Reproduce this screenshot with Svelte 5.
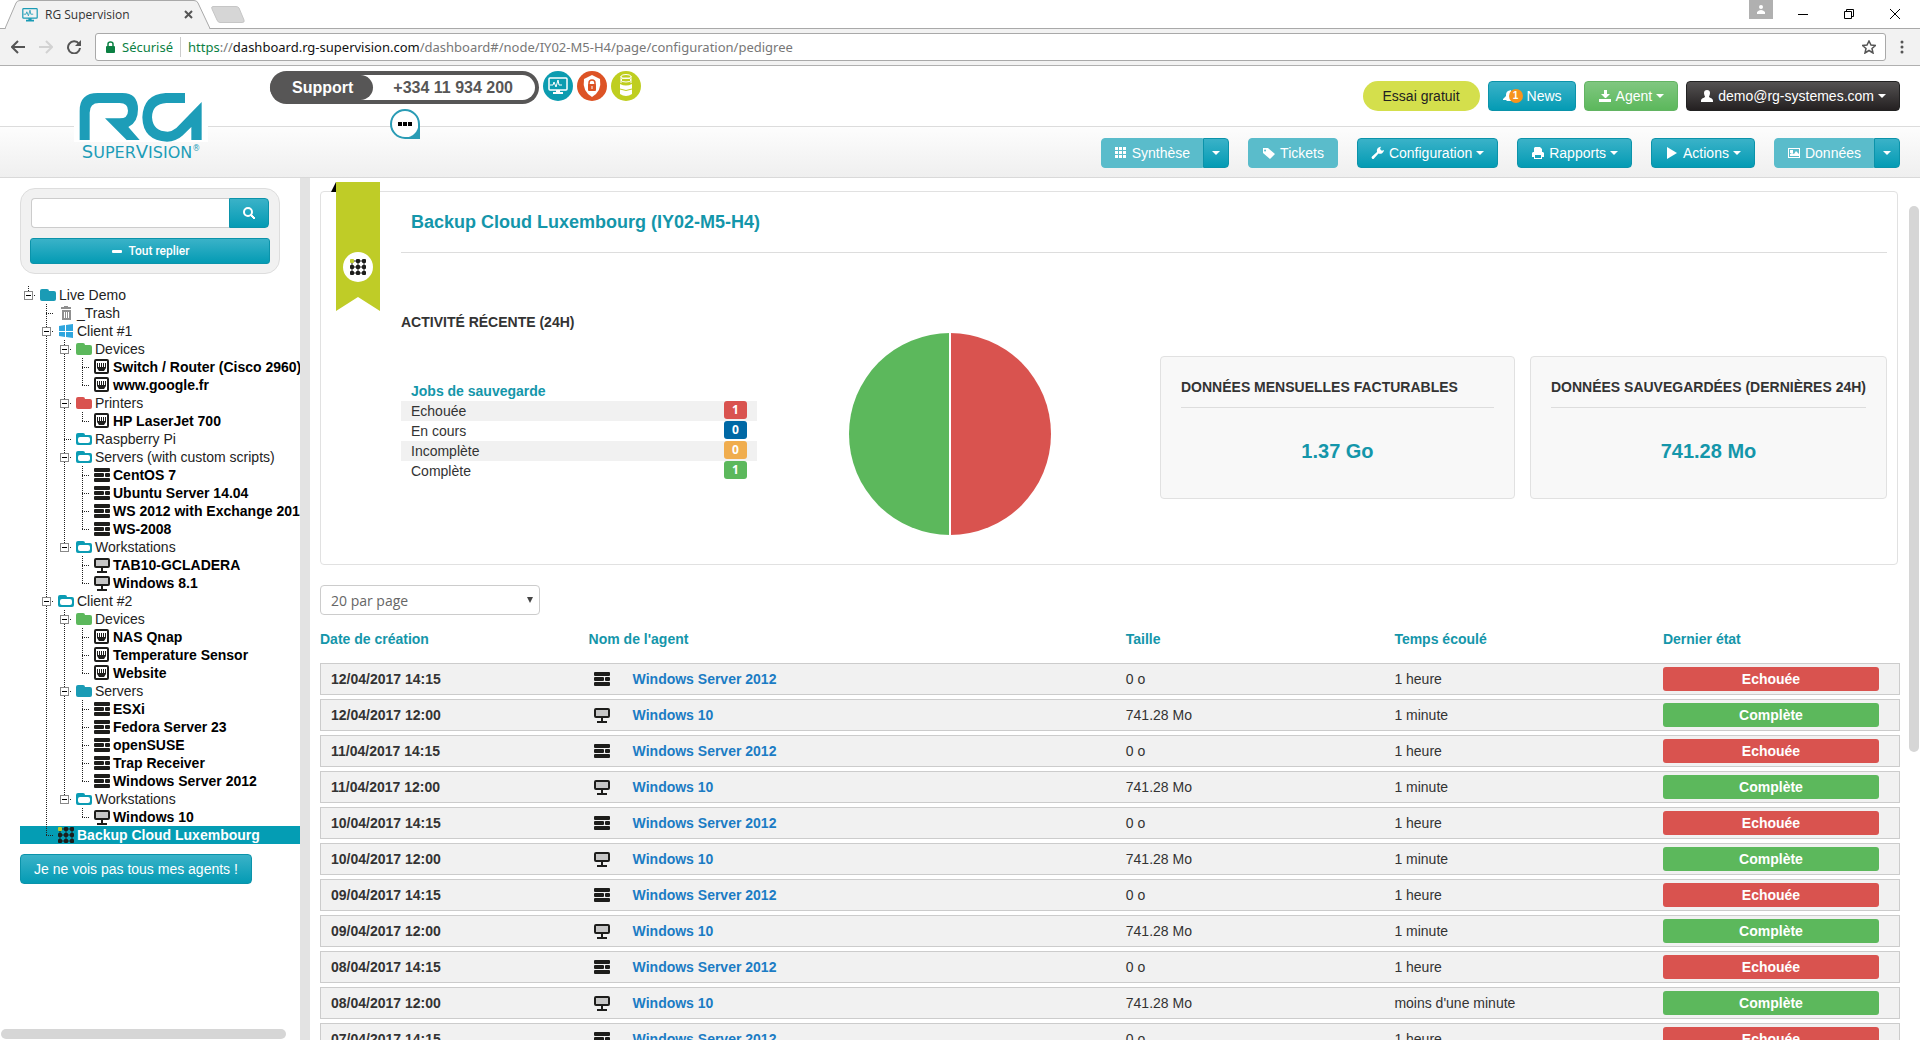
<script lang="ts">
  type TreeNode = { label: string; icon: string; children?: TreeNode[] }
  type TreeRow = { node: TreeNode; lasts: boolean[]; key: string }

  const tree: TreeNode = {
    label: 'Live Demo',
    icon: 'folder-blue',
    children: [
      { label: '_Trash', icon: 'trash' },
      {
        label: 'Client #1',
        icon: 'windows',
        children: [
          {
            label: 'Devices',
            icon: 'folder-green',
            children: [
              { label: 'Switch / Router (Cisco 2960)', icon: 'port' },
              { label: 'www.google.fr', icon: 'port' },
            ],
          },
          { label: 'Printers', icon: 'folder-red', children: [{ label: 'HP LaserJet 700', icon: 'port' }] },
          { label: 'Raspberry Pi', icon: 'folder-open' },
          {
            label: 'Servers (with custom scripts)',
            icon: 'folder-open',
            children: [
              { label: 'CentOS 7', icon: 'server' },
              { label: 'Ubuntu Server 14.04', icon: 'server' },
              { label: 'WS 2012 with Exchange 2013', icon: 'server' },
              { label: 'WS-2008', icon: 'server' },
            ],
          },
          {
            label: 'Workstations',
            icon: 'folder-open',
            children: [
              { label: 'TAB10-GCLADERA', icon: 'screen' },
              { label: 'Windows 8.1', icon: 'screen' },
            ],
          },
        ],
      },
      {
        label: 'Client #2',
        icon: 'folder-open',
        children: [
          {
            label: 'Devices',
            icon: 'folder-green',
            children: [
              { label: 'NAS Qnap', icon: 'port' },
              { label: 'Temperature Sensor', icon: 'port' },
              { label: 'Website', icon: 'port' },
            ],
          },
          {
            label: 'Servers',
            icon: 'folder-blue',
            children: [
              { label: 'ESXi', icon: 'server' },
              { label: 'Fedora Server 23', icon: 'server' },
              { label: 'openSUSE', icon: 'server' },
              { label: 'Trap Receiver', icon: 'server' },
              { label: 'Windows Server 2012', icon: 'server' },
            ],
          },
          { label: 'Workstations', icon: 'folder-open', children: [{ label: 'Windows 10', icon: 'screen' }] },
        ],
      },
      { label: 'Backup Cloud Luxembourg', icon: 'grid' },
    ],
  }

  const agentIcons = ['port', 'server', 'screen', 'grid']

  let collapsed = $state<Record<string, boolean>>({})
  let selected = $state('Backup Cloud Luxembourg')

  function flatten(node: TreeNode, lasts: boolean[], key: string): TreeRow[] {
    const rows: TreeRow[] = [{ node, lasts, key }]
    if (node.children && !collapsed[key]) {
      const count = node.children.length
      node.children.forEach((child, i) => {
        rows.push(...flatten(child, [...lasts, i === count - 1], `${key}.${i}`))
      })
    }
    return rows
  }

  let rows = $derived(flatten(tree, [true], '0'))

  const jobs = [
    { label: 'Echouée', count: 1, kind: 'danger' },
    { label: 'En cours', count: 0, kind: 'info' },
    { label: 'Incomplète', count: 0, kind: 'warning' },
    { label: 'Complète', count: 1, kind: 'success' },
  ]

  const stats = [
    { title: 'DONNÉES MENSUELLES FACTURABLES', value: '1.37 Go' },
    { title: 'DONNÉES SAUVEGARDÉES (DERNIÈRES 24H)', value: '741.28 Mo' },
  ]

  const backups = ['12', '11', '10', '09', '08', '07']
    .flatMap((day) => [
      { date: `${day}/04/2017 14:15`, agent: 'Windows Server 2012', icon: 'server', size: '0 o', time: '1 heure', ok: false },
      {
        date: `${day}/04/2017 12:00`,
        agent: 'Windows 10',
        icon: 'screen',
        size: '741.28 Mo',
        time: day === '08' ? "moins d'une minute" : '1 minute',
        ok: true,
      },
    ])
    .slice(0, 11)
</script>

{#snippet icon(name: string)}
  <svg class="icon" viewBox="0 0 16 16" width="16" height="16" aria-hidden="true">
    {#if name === 'folder-blue' || name === 'folder-green' || name === 'folder-red'}
      <path
        fill={name === 'folder-blue' ? '#1a9bb5' : name === 'folder-green' ? '#5cb85c' : '#d9534f'}
        d="M0 4a2 2 0 0 1 2-2h5a2 2 0 0 1 2 2h5a2 2 0 0 1 2 2v6a2 2 0 0 1-2 2H2a2 2 0 0 1-2-2z"
      />
    {:else if name === 'folder-open'}
      <path
        fill="#0b9cb4"
        fill-rule="evenodd"
        d="M0 4a2 2 0 0 1 2-2h5a2 2 0 0 1 2 2h5a2 2 0 0 1 2 2v6a2 2 0 0 1-2 2H2a2 2 0 0 1-2-2zM4 6a2 2 0 0 0-2 2v2a2 2 0 0 0 2 2h8a2 2 0 0 0 2-2V8a2 2 0 0 0-2-2z"
      />
    {:else if name === 'trash'}
      <path fill="#8f8f8f" d="M3 2h3V1h4v1h3v2H3zM4 5h9v10H4zm2 2v6h1V7zm2 0v6h1V7zm2 0v6h1V7z" fill-rule="evenodd" />
    {:else if name === 'windows'}
      <path fill="#2fa6de" d="M1 3l6-1v6H1zM8 2l7-1v7H8zM1 9h6v5l-6-1zM8 9h7v6l-7-1z" />
    {:else if name === 'port'}
      <rect x="1" y="1" width="13" height="13" rx="1" fill="#fff" stroke="#1d1d1b" stroke-width="2" />
      <path fill="#1d1d1b" d="M3 4h1v4h1V4h1v4h1V4h1v4h1V4h1v4h1V4h1v5l-2 3H5L3 9z" />
    {:else if name === 'server'}
      <path
        fill="#1d1d1b"
        d="M1 1h14a1 1 0 0 1 1 1v2a1 1 0 0 1-1 1H1a1 1 0 0 1-1-1V2a1 1 0 0 1 1-1zM1 6h8a1 1 0 0 1 1 1v2a1 1 0 0 1-1 1H1a1 1 0 0 1-1-1V7a1 1 0 0 1 1-1zM12 6h3a1 1 0 0 1 1 1v2a1 1 0 0 1-1 1h-3a1 1 0 0 1-1-1V7a1 1 0 0 1 1-1zM1 11h14a1 1 0 0 1 1 1v2a1 1 0 0 1-1 1H1a1 1 0 0 1-1-1v-2a1 1 0 0 1 1-1z"
      />
    {:else if name === 'screen'}
      <rect x="1" y="2" width="14" height="8" rx="1" fill="#c6c6c6" stroke="#1d1d1b" stroke-width="2" />
      <path fill="#1d1d1b" d="M7 10h2v4h4v2H3v-2h4z" />
    {:else if name === 'grid'}
      <path stroke="#1d1d1b" stroke-width="1" d="M2 2v12M8 2v12M14 2v12M2 2h12M2 8h12M2 14h12" />
      {#each [0, 6, 12] as y}
        {#each [0, 6, 12] as x}
          <rect {x} {y} width="4" height="4" rx="1" fill={x + y === 0 ? '#bccb2b' : '#1d1d1b'} />
        {/each}
      {/each}
    {/if}
  </svg>
{/snippet}

{#snippet glyph(name: string)}
  <svg class="glyph" viewBox="0 0 14 14" width="14" height="14" fill="currentColor" aria-hidden="true">
    {#if name === 'th'}
      <path d="M1 1h3v3H1zM5 1h3v3H5zM9 1h3v3H9zM1 5h3v3H1zM5 5h3v3H5zM9 5h3v3H9zM1 9h3v3H1zM5 9h3v3H5zM9 9h3v3H9z" />
    {:else if name === 'tag'}
      <path fill-rule="evenodd" d="M1 2h5l7 6-5 5-7-6zm2 1.500a1 1 0 1 0 .1 2 1 1 0 0 0-.1-2z" />
    {:else if name === 'wrench'}
      <path d="M13 4a4 4 0 0 1-5.500 3.500L3 12.500a1.400 1.400 0 0 1-2-2L6 6A4 4 0 0 1 10 .800L9 3l1.800 1.800z" />
    {:else if name === 'print'}
      <path fill-rule="evenodd" d="M4 1h5l2 2v3h1l1 1v4h-2v2H3v-2H1V7l1-1h1V2zm0 8v3h6V9z" />
    {:else if name === 'play'}
      <path d="M2 1l10 6-10 6z" />
    {:else if name === 'picture'}
      <path fill-rule="evenodd" d="M1 2h12v10H1zm1 1v8h10V3zM3 4h3v3H3zM3 10V8l2-1 2 1 2-3 3 3v2z" />
    {:else if name === 'bell'}
      <path d="M9 1L6 2C4 3 4 5 4 7l-3 3v1h3l1 1h4z" />
    {:else if name === 'download'}
      <path d="M6 1h3v4h3L8 9H7L3 5h3zM1 10h12v3H1z" />
    {:else if name === 'user'}
      <path d="M7 1c2 0 3 1 3 3s-1 3-1 4c1 1 4 1 4 4v1H1v-1c0-3 3-3 4-4 0-1-1-2-1-4s1-3 3-3z" />
    {:else if name === 'search'}
      <circle cx="6" cy="6" r="4" fill="none" stroke="currentColor" stroke-width="2" />
      <path d="M8 9l1-1 4 4-1 1z" stroke="currentColor" />
    {:else if name === 'minus'}
      <rect x="2" y="6" width="10" height="3" rx="1" />
    {/if}
  </svg>
{/snippet}

{#snippet monitor(stroke: string)}
  <rect x="1" y="2" width="18" height="12" rx="1" fill="none" {stroke} stroke-width="1.500" />
  <path d="M2 9h3l1-3 2 5 2-7 1 5h3" fill="none" {stroke} />
  <path d="M8 14h4v2h3v2H5v-2h3z" fill={stroke} />
{/snippet}

<div class="window">
  <div class="tab-strip">
    <div class="tab">
      <svg class="tab-shape" viewBox="0 0 206 29" width="206" height="29" aria-hidden="true">
        <path d="M0 28.500L11 3Q12 .500 15 .500H189Q192 .500 193 3L205 28.500" fill="#f2f2f2" stroke="#a9a9a9" />
        <path d="M1 28.500H204" stroke="#f2f2f2" />
      </svg>
      <svg viewBox="0 0 20 20" width="16" height="16" aria-hidden="true">{@render monitor('#1a9bb5')}</svg>
      <span class="tab-title">RG Supervision</span>
      <button type="button" class="plain" aria-label="Fermer l'onglet">
        <svg viewBox="0 0 9 9" width="9" height="9"><path d="M1 1l7 7M8 1l-7 7" stroke="#555" stroke-width="2" /></svg>
      </button>
    </div>
    <button type="button" class="plain new-tab" aria-label="Nouvel onglet">
      <svg viewBox="0 0 34 17" width="34" height="17">
        <path d="M2 .500H25Q27 .500 28 2L33 14Q34 16.500 31 16.500H9Q7 16.500 6 14L1 3Q0 .500 2 .500z" fill="#d6d6d6" stroke="#c6c6c6" />
      </svg>
    </button>
    <div class="window-controls">
      <span class="profile">
        <svg viewBox="0 0 8 9" width="8" height="9"><circle cx="4" cy="2" r="2" fill="#fff" /><path d="M0 9V7q4-4 8 0v2z" fill="#fff" /></svg>
      </span>
      <button type="button" class="plain" aria-label="Réduire">
        <svg viewBox="0 0 10 10" width="10" height="10"><path d="M0 5.500h10" stroke="#000" /></svg>
      </button>
      <button type="button" class="plain" aria-label="Restaurer">
        <svg viewBox="0 0 10 10" width="10" height="10"><path d="M.500 2.500h7v7h-7zM2.500 2V.500h7v7H8" fill="none" stroke="#000" /></svg>
      </button>
      <button type="button" class="plain" aria-label="Fermer">
        <svg viewBox="0 0 10 10" width="10" height="10"><path d="M0 0l10 10M10 0L0 10" stroke="#000" /></svg>
      </button>
    </div>
  </div>

  <div class="toolbar">
    <button type="button" class="plain" aria-label="Précédent">
      <svg viewBox="0 0 14 14" width="14" height="14"><path d="M14 7H1M7 1L1 7l6 6" fill="none" stroke="#555" stroke-width="2" /></svg>
    </button>
    <button type="button" class="plain" aria-label="Suivant">
      <svg viewBox="0 0 14 14" width="14" height="14"><path d="M0 7h13M7 1l6 6-6 6" fill="none" stroke="#d2d2d2" stroke-width="2" /></svg>
    </button>
    <button type="button" class="plain" aria-label="Actualiser">
      <svg viewBox="0 0 14 14" width="14" height="14"><path d="M12 4A6 6 0 1 0 13 8" fill="none" stroke="#555" stroke-width="2" /><path d="M14 0v6H8z" fill="#555" /></svg>
    </button>
    <div class="address">
      <svg viewBox="0 0 9 12" width="9" height="12" aria-hidden="true">
        <path d="M2 5V3q0-2 2.500-2T7 3v2" fill="none" stroke="#0b8043" stroke-width="1.500" /><rect y="5" width="9" height="7" rx="1" fill="#0b8043" />
      </svg>
      <span class="secure">Sécurisé</span>
      <span class="url"><span class="secure">https</span>://<b>dashboard.rg-supervision.com</b>/dashboard#/node/IY02-M5-H4/page/configuration/pedigree</span>
      <svg viewBox="0 0 14 14" width="14" height="14" aria-hidden="true">
        <path d="M7 1l2 4 4.500.500L10 8.500l1 4.500-4-2.500L3 13l1-4.500L.500 5.500 5 5z" fill="none" stroke="#555" stroke-width="1.500" />
      </svg>
    </div>
    <button type="button" class="plain" aria-label="Menu">
      <svg viewBox="0 0 4 16" width="4" height="16" fill="#555"><circle cx="2" cy="3" r="1.500" /><circle cx="2" cy="8" r="1.500" /><circle cx="2" cy="13" r="1.500" /></svg>
    </button>
  </div>

  <header class="header">
    <a class="logo" href="#home">
      <svg viewBox="56 94 372 150" width="124" height="50" fill="#1d9db8" aria-hidden="true">
        <path d="M58 238V150Q58 97 112 97H186Q233 97 233 146 233 186 204 199L238 238H199L134 173H178Q203 173 203 150 203 127 178 127H116Q88 127 88 156V238z" />
        <path d="M374 97V127H318Q275 130 275 170 278 213 322 213 336 212 348 202L424 124V238H393V199L366 225Q347 242 320 243 248 240 246 170 249 101 316 97z" />
      </svg>
      <span class="logo-text">S<small>UPER</small>V<small>ISION</small><sup>®</sup></span>
    </a>

    <div class="support">
      <div class="support-line">
        <strong class="support-label">Support</strong>
        <strong class="support-phone">+334 11 934 200</strong>
      </div>
      <button type="button" class="chat" aria-label="Discussion"><span></span></button>
    </div>

    <div class="products">
      <a href="#supervision" class="product blue" aria-label="Supervision">
        <svg viewBox="0 0 20 20" width="20" height="20">{@render monitor('#fff')}</svg>
      </a>
      <a href="#antivirus" class="product orange" aria-label="Antivirus">
        <svg viewBox="0 0 20 22" width="20" height="22">
          <path d="M10 0l8 4q2 12-8 18Q0 16 2 4z" fill="#fff" />
          <path d="M7 10V8a3 3 0 0 1 6 0v2" fill="none" stroke="#dd5325" stroke-width="1.500" />
          <rect x="6" y="9" width="8" height="7" rx="1" fill="#dd5325" /><path d="M10 11v3" stroke="#fff" />
        </svg>
      </a>
      <a href="#backup" class="product green" aria-label="Sauvegarde">
        <svg viewBox="0 0 14 24" width="14" height="24">
          <path d="M1 10v10q6 4 12 0V10q-6 3-12 0z" fill="#fff" />
          <path d="M1 15q6 3 12 0" fill="none" stroke="#bfce20" />
          <g fill="none" stroke="#fff"><ellipse cx="7" cy="2.500" rx="5" ry="2" /><ellipse cx="7" cy="6" rx="5" ry="2" /><path d="M2 2v7M12 2v7" /></g>
        </svg>
      </a>
    </div>

    <nav class="menus">
      <div class="menu-row top">
        <a href="#essai" class="trial">Essai gratuit</a>
        <button type="button" class="btn">
          <span class="bell">{@render glyph('bell')}<span class="bell-count">1</span></span>News
        </button>
        <button type="button" class="btn btn-green">{@render glyph('download')}Agent<span class="caret"></span></button>
        <button type="button" class="btn btn-dark">{@render glyph('user')}demo@rg-systemes.com<span class="caret"></span></button>
      </div>
      <div class="menu-row">
        <div class="split">
          <button type="button" class="btn btn-soft">{@render glyph('th')}Synthèse</button>
          <button type="button" class="btn btn-toggle" aria-label="Plus de synthèse"><span class="caret"></span></button>
        </div>
        <button type="button" class="btn btn-soft">{@render glyph('tag')}Tickets</button>
        <button type="button" class="btn">{@render glyph('wrench')}Configuration<span class="caret"></span></button>
        <button type="button" class="btn">{@render glyph('print')}Rapports<span class="caret"></span></button>
        <button type="button" class="btn">{@render glyph('play')}Actions<span class="caret"></span></button>
        <div class="split">
          <button type="button" class="btn btn-soft">{@render glyph('picture')}Données</button>
          <button type="button" class="btn btn-toggle" aria-label="Plus de données"><span class="caret"></span></button>
        </div>
      </div>
    </nav>
  </header>

  <div class="body">
    <aside class="sidebar">
      <form class="search-box" onsubmit={(e) => e.preventDefault()}>
        <div class="search-row">
          <input type="text" aria-label="Rechercher" />
          <button type="submit" class="btn search-btn" aria-label="Lancer la recherche">{@render glyph('search')}</button>
        </div>
        <button type="button" class="btn collapse-btn" onclick={() => (collapsed = { '0': true })}>
          {@render glyph('minus')}Tout replier
        </button>
      </form>

      <ul class="tree">
        {#each rows as row (row.key)}
          <li class="tree-row" class:selected={selected === row.node.label}>
            {#each row.lasts as last, depth}
              {#if depth < row.lasts.length - 1}
                <svg class="guide" viewBox="0 0 18 18" width="18" height="18" aria-hidden="true">
                  {#if !last}<path d="M8.500 0v18" />{/if}
                </svg>
              {:else}
                <button
                  type="button"
                  class="plain guide"
                  disabled={!row.node.children}
                  aria-label={`Replier ${row.node.label}`}
                  onclick={() => (collapsed[row.key] = !collapsed[row.key])}
                >
                  <svg viewBox="0 0 18 18" width="18" height="18">
                    <path d={last ? 'M8.500 0v9' : 'M8.500 0v18'} />
                    <path d="M8 9.500h7" />
                    {#if row.node.children}
                      <rect x="4.500" y="5.500" width="8" height="8" />
                      <path class="sign" d={collapsed[row.key] ? 'M6 9.500h5M8.500 7v5' : 'M6 9.500h5'} />
                    {/if}
                  </svg>
                </button>
              {/if}
            {/each}
            {@render icon(row.node.icon)}
            <a
              href={`#node-${row.key}`}
              class="tree-label"
              class:agent={agentIcons.includes(row.node.icon)}
              onclick={() => (selected = row.node.label)}>{row.node.label}</a
            >
          </li>
        {/each}
      </ul>

      <button type="button" class="btn missing-btn">Je ne vois pas tous mes agents !</button>
      <div class="thumb thumb-x"></div>
    </aside>

    <main class="content">
      <section class="card">
        <svg class="ribbon" viewBox="0 0 49 129" width="49" height="129" aria-hidden="true">
          <path d="M5 0L0 10h5z" fill="#000" />
          <path d="M5 0h44v129l-22-14-22 14z" fill="#bfcc27" />
          <circle cx="27" cy="85" r="15" fill="#fff" />
          <svg x="19" y="77" width="16" height="16" viewBox="0 0 16 16">{@render icon('grid')}</svg>
        </svg>

        <h1>Backup Cloud Luxembourg (IY02-M5-H4)</h1>
        <h2>ACTIVITÉ RÉCENTE (24H)</h2>

        <div class="summary">
          <div class="half">
            <div class="jobs">
              <h3>Jobs de sauvegarde</h3>
              <ul>
                {#each jobs as job}
                  <li><span>{job.label}</span><span class="count {job.kind}">{job.count}</span></li>
                {/each}
              </ul>
            </div>
            <svg class="pie" viewBox="0 0 204 204" width="204" height="204" role="img" aria-label="Jobs de sauvegarde">
              <path d="M102 1a101 101 0 0 1 0 202z" fill="#d9534f" />
              <path d="M102 1a101 101 0 0 0 0 202z" fill="#5cb85c" />
              <path d="M102 0v204" stroke="#fff" stroke-width="2" />
            </svg>
          </div>
          <div class="half">
            {#each stats as stat}
              <div class="stat">
                <h4>{stat.title}</h4>
                <p>{stat.value}</p>
              </div>
            {/each}
          </div>
        </div>
      </section>

      <div class="page-size">
        <select aria-label="Nombre de lignes">
          <option>20 par page</option>
          <option>50 par page</option>
          <option>100 par page</option>
        </select>
      </div>

      <table>
        <thead>
          <tr>
            <th class="col-date">Date de création</th>
            <th class="col-agent">Nom de l'agent</th>
            <th class="col-size">Taille</th>
            <th class="col-time">Temps écoulé</th>
            <th>Dernier état</th>
          </tr>
        </thead>
        <tbody>
          {#each backups as backup}
            <tr>
              <td class="date">{backup.date}</td>
              <td>
                <div class="agent-cell">{@render icon(backup.icon)}<a href="#agent">{backup.agent}</a></div>
              </td>
              <td>{backup.size}</td>
              <td>{backup.time}</td>
              <td><span class="state {backup.ok ? 'success' : 'danger'}">{backup.ok ? 'Complète' : 'Echouée'}</span></td>
            </tr>
          {/each}
        </tbody>
      </table>
      <div class="thumb thumb-y"></div>
    </main>
  </div>
</div>

<style>
  :global(body) {
    margin: 0;
    background: #fff;
  }

  .window {
    display: flex;
    flex-direction: column;
    height: 100vh;
    overflow: hidden;
    color: #333;
    font-family: 'Liberation Sans', Arial, sans-serif;
    font-size: 14px;
    line-height: 20px;
  }

  .window * {
    box-sizing: border-box;
  }

  svg {
    display: block;
    flex-shrink: 0;
  }

  ul {
    margin: 0;
    padding: 0;
    list-style: none;
  }

  button {
    font-family: inherit;
  }

  .plain {
    display: block;
    padding: 0;
    border: 0;
    background: none;
    cursor: pointer;
  }

  /* browser frame */
  .tab-strip {
    display: flex;
    flex-shrink: 0;
    height: 29px;
    padding-left: 5px;
    border-bottom: 1px solid #a9a9a9;
  }

  .tab {
    position: relative;
    display: flex;
    align-items: center;
    gap: 7px;
    width: 206px;
    height: 29px;
    padding: 0 18px 0 17px;
    font-family: 'Open Sans', sans-serif;
    font-size: 12px;
  }

  .tab > * {
    position: relative;
  }

  .tab .tab-shape {
    position: absolute;
    top: 0;
    left: 0;
  }

  .tab-title {
    flex: 1;
    white-space: nowrap;
  }

  .new-tab {
    align-self: center;
  }

  .window-controls {
    display: flex;
    align-items: center;
    gap: 36px;
    margin-left: auto;
    padding-right: 20px;
  }

  .profile {
    display: flex;
    align-items: center;
    justify-content: center;
    align-self: flex-start;
    width: 24px;
    height: 19px;
    margin-right: -11px;
    background: #b0b0b0;
  }

  .toolbar {
    display: flex;
    flex-shrink: 0;
    align-items: center;
    gap: 14px;
    height: 37px;
    padding: 0 16px 0 11px;
    border-bottom: 1px solid #b0b0b0;
    background: #f2f2f2;
  }

  .address {
    display: flex;
    flex: 1;
    align-items: center;
    gap: 7px;
    height: 28px;
    padding: 0 9px 0 10px;
    border: 1px solid #a9a9a9;
    border-radius: 3px;
    background: #fff;
    color: #777;
    font-family: 'Noto Sans', sans-serif;
    font-size: 13px;
  }

  .url {
    flex: 1;
    padding-left: 7px;
    border-left: 1px solid #ccc;
    white-space: nowrap;
  }

  .url b {
    color: #111;
    font-weight: 400;
  }

  .secure {
    color: #0b8043;
  }

  /* header */
  .header {
    display: flex;
    flex-shrink: 0;
    align-items: flex-start;
    height: 112px;
    padding: 0 20px 0 74px;
    border-bottom: 1px solid #d9d9d9;
    background: linear-gradient(#fff 60px, #dcdcdc 60px, #dcdcdc 61px, #fdfdfd 61px, #efefef);
  }

  .logo {
    width: 134px;
    margin-top: 26px;
    color: #1d9db8;
    font-family: 'DejaVu Sans', sans-serif;
    font-size: 18px;
    line-height: 20px;
    text-align: center;
    text-decoration: none;
    white-space: nowrap;
  }

  .logo svg {
    box-sizing: content-box;
    padding: 0 5px;
    background: #fff;
  }

  .logo-text small {
    font-size: 16px;
  }

  .logo-text sup {
    font-size: 8px;
    line-height: 1;
  }

  .support {
    display: flex;
    flex-direction: column;
    align-items: center;
    gap: 5px;
    margin: 5px 4px 0 62px;
  }

  .support-line {
    display: flex;
    padding: 4px 4px 4px 0;
    border-radius: 17px;
    background: #575656;
    font-size: 16px;
    line-height: 25px;
  }

  .support-label {
    z-index: 1;
    padding: 0 20px 0 22px;
    border-radius: 13px;
    background: #575656;
    color: #fff;
  }

  .support-phone {
    margin-left: -16px;
    padding: 0 22px 0 36px;
    border-radius: 0 13px 13px 0;
    background: #fff;
    color: #575656;
  }

  .chat {
    display: flex;
    align-items: center;
    justify-content: center;
    width: 30px;
    height: 30px;
    padding: 0;
    border: 2px solid #2a9cb5;
    border-radius: 50% 50% 0 50%;
    background: radial-gradient(circle, #fff 13px, #2a9cb5 14px);
  }

  .chat span {
    width: 14px;
    height: 4px;
    background: repeating-linear-gradient(90deg, #000 0 4px, transparent 4px 5px);
  }

  .products {
    display: flex;
    gap: 4px;
    margin-top: 5px;
  }

  .product {
    display: flex;
    align-items: center;
    justify-content: center;
    width: 30px;
    height: 30px;
    border-radius: 50%;
  }

  .product.blue {
    background: #0c9cb0;
  }

  .product.orange {
    background: #dd5325;
  }

  .product.green {
    background: #bfce20;
  }

  .menus {
    display: flex;
    flex-direction: column;
    align-items: flex-end;
    gap: 27px;
    margin-left: auto;
    padding-top: 15px;
  }

  .menu-row {
    display: flex;
    gap: 19px;
  }

  .menu-row.top {
    gap: 8px;
  }

  .btn {
    display: flex;
    align-items: center;
    justify-content: center;
    gap: 4px;
    height: 30px;
    padding: 0 13px;
    border: 1px solid #0b93aa;
    border-radius: 4px;
    background: linear-gradient(#3ab2c8, #049bb4);
    color: #fff;
    font-size: 14px;
    white-space: nowrap;
    cursor: pointer;
  }

  .btn-green {
    border-color: #62b462;
    background: linear-gradient(#80c780, #5cb85c);
  }

  .btn-dark {
    border-color: #222;
    background: linear-gradient(#545252, #242021);
  }

  .btn-soft {
    border-color: #5abccb;
    background: #5abccb;
  }

  .caret {
    border: 4px solid transparent;
    border-top-color: #fff;
    border-bottom: 0;
  }

  .split {
    display: flex;
  }

  .split .btn-soft {
    padding: 0 12px;
    border-radius: 4px 0 0 4px;
  }

  .btn-toggle {
    padding: 0 8px;
    border-radius: 0 4px 4px 0;
  }

  .trial {
    padding: 0 20px;
    border-radius: 15px;
    background: #d4df4c;
    color: #222;
    line-height: 30px;
    text-decoration: none;
  }

  .bell {
    display: flex;
    align-items: center;
  }

  .bell-count {
    width: 14px;
    height: 14px;
    margin-left: -7px;
    border-radius: 50%;
    background: #f7941d;
    font-size: 10px;
    font-weight: 700;
    line-height: 14px;
    text-align: center;
  }

  /* sidebar */
  .body {
    display: flex;
    flex: 1;
    min-height: 0;
  }

  .sidebar {
    position: relative;
    flex-shrink: 0;
    width: 310px;
    padding: 10px 0 0 20px;
    border-right: 10px solid #e3e3e3;
    overflow: hidden;
  }

  .search-box {
    display: flex;
    flex-direction: column;
    gap: 10px;
    width: 260px;
    padding: 9px;
    border: 1px solid #ddd;
    border-radius: 15px;
    background: #f1f1f1;
  }

  .search-row {
    display: flex;
    padding: 0 1px;
  }

  .search-row input {
    flex: 1;
    min-width: 0;
    height: 30px;
    padding: 0 8px;
    border: 1px solid #ccc;
    border-right: 0;
    border-radius: 4px 0 0 4px;
    background: #fff;
    font: inherit;
  }

  .search-btn {
    padding: 0 12px;
    border-radius: 0 4px 4px 0;
  }

  .collapse-btn {
    height: 26px;
    border-radius: 3px;
    font-family: Roboto, sans-serif;
    font-size: 12px;
    font-weight: 500;
  }

  .tree {
    margin-top: 12px;
  }

  .tree-row {
    display: flex;
    align-items: center;
    height: 18px;
    color: #222;
    line-height: 18px;
    white-space: nowrap;
  }

  .tree-row .icon {
    margin-left: 2px;
  }

  .tree-row.selected {
    background: #049db4;
    color: #fff;
  }

  .guide {
    width: 18px;
    flex-shrink: 0;
  }

  .tree-row .guide:disabled {
    cursor: default;
  }

  .guide path {
    fill: none;
    stroke: #222;
    stroke-dasharray: 1 1;
  }

  .guide rect {
    fill: #fff;
    stroke: #888;
  }

  .guide .sign {
    stroke: #000;
    stroke-dasharray: none;
  }

  .tree-label {
    padding-left: 3px;
    color: inherit;
    text-decoration: none;
  }

  .tree-label.agent {
    font-weight: 700;
  }

  .tree-row:not(.selected) .tree-label.agent {
    color: #000;
  }

  .missing-btn {
    margin-top: 10px;
  }

  .thumb {
    position: absolute;
    border-radius: 5px;
    background: #d6d6d6;
  }

  .thumb-x {
    bottom: 1px;
    left: 1px;
    width: 285px;
    height: 10px;
  }

  .thumb-y {
    top: 28px;
    right: 1px;
    width: 10px;
    height: 546px;
  }

  /* content */
  .content {
    position: relative;
    flex: 1;
    min-width: 0;
    padding: 13px 20px 0 10px;
    overflow: hidden;
  }

  .card {
    position: relative;
    height: 374px;
    margin-right: 2px;
    padding: 10px 10px 0 80px;
    border: 1px solid #e1e1e1;
    border-radius: 4px;
  }

  .ribbon {
    position: absolute;
    top: -10px;
    left: 10px;
  }

  h1,
  h2,
  h3,
  h4,
  p {
    margin: 0;
    font-size: 14px;
  }

  h1 {
    height: 51px;
    padding-left: 10px;
    border-bottom: 1px solid #ddd;
    color: #1496aa;
    font-size: 18px;
    line-height: 40px;
  }

  h2 {
    margin-top: 59px;
  }

  .summary {
    display: grid;
    grid-template-columns: 1fr 1fr;
    gap: 32px;
  }

  .half {
    display: grid;
    grid-template-columns: 1fr 1fr;
    gap: 15px;
    align-items: start;
  }

  .jobs {
    padding-top: 49px;
  }

  h3 {
    padding-left: 10px;
    color: #1496aa;
  }

  .jobs li {
    display: flex;
    justify-content: space-between;
    height: 20px;
    padding: 0 10px;
  }

  .jobs li:nth-child(odd) {
    background: #f1f1f1;
  }

  .count {
    width: 23px;
    height: 18px;
    border-radius: 3px;
    color: #fff;
    font-family: 'Open Sans', sans-serif;
    font-size: 12px;
    font-weight: 700;
    line-height: 18px;
    text-align: center;
  }

  .danger {
    background: #d9534f;
  }

  .info {
    background: #0068a5;
  }

  .warning {
    background: #f0ad4e;
  }

  .success {
    background: #5cb85c;
  }

  .pie {
    justify-self: center;
  }

  .stat {
    height: 143px;
    margin-top: 24px;
    padding: 20px;
    border: 1px solid #e1e1e1;
    border-radius: 4px;
    background: #f8f8f8;
    white-space: nowrap;
  }

  h4 {
    padding-bottom: 10px;
    border-bottom: 1px solid #ddd;
  }

  .stat p {
    margin-top: 31px;
    color: #1496aa;
    font-size: 20px;
    font-weight: 700;
    line-height: 24px;
    text-align: center;
  }

  .page-size {
    position: relative;
    width: 220px;
    margin-top: 20px;
  }

  .page-size::after {
    content: '';
    position: absolute;
    top: 12px;
    right: 7px;
    border: 3px solid transparent;
    border-top: 6px solid #444;
    border-bottom: 0;
  }

  select {
    display: block;
    width: 100%;
    height: 30px;
    padding: 0 10px;
    border: 1px solid #ccc;
    border-radius: 4px;
    appearance: none;
    background: #fff;
    color: #666;
    font-family: 'Open Sans', sans-serif;
    font-size: 14px;
  }

  table {
    width: 100%;
    table-layout: fixed;
    border-collapse: separate;
    border-spacing: 0 4px;
  }

  th {
    height: 40px;
    padding: 0;
    color: #1496aa;
    text-align: left;
  }

  .col-date,
  .col-size,
  .col-time {
    width: 17%;
  }

  .col-agent {
    width: 34%;
  }

  td {
    height: 32px;
    padding: 0;
    border: solid #ccc;
    border-width: 1px 0;
    background: #f1f1f1;
  }

  td:first-child {
    padding-left: 10px;
    border-left-width: 1px;
  }

  td:last-child {
    padding-right: 20px;
    border-right-width: 1px;
  }

  .date {
    font-weight: 700;
  }

  .agent-cell {
    display: flex;
    align-items: center;
    gap: 23px;
    padding-left: 5px;
  }

  .agent-cell a {
    color: #1b7cc4;
    font-weight: 700;
    text-decoration: none;
  }

  .state {
    display: block;
    height: 24px;
    border-radius: 3px;
    color: #fff;
    font-weight: 700;
    line-height: 24px;
    text-align: center;
  }
</style>
